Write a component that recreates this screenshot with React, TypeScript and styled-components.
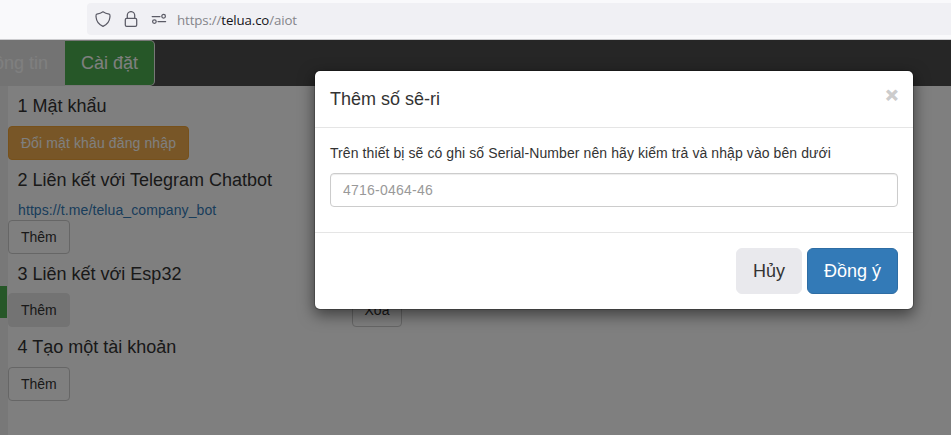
import React from "react";
import styled, { createGlobalStyle, css } from "styled-components";

const Global = createGlobalStyle`
  *, *::before, *::after { box-sizing: border-box; }
  html, body { margin: 0; padding: 0; overflow: hidden; }
  body {
    font-family: "Liberation Sans", Arial, sans-serif;
    font-size: 14px;
    line-height: 20px;
    color: #333;
    background: #fff;
  }
  button, input { font-family: inherit; margin: 0; }
`;

const Window = styled.div`
  display: flex;
  flex-direction: column;
  width: 100%;
  height: 435px;
`;

const BrowserBar = styled.header`
  flex: none;
  height: 40px;
  padding: 3px 0 0 87px;
  background: #f9f9fb;
  border-bottom: 1px solid #cccccf;
`;

const AddressField = styled.div`
  display: flex;
  align-items: center;
  height: 32px;
  padding-left: 8px;
  background: #f0f0f4;
  border-radius: 4px 0 0 4px;
  svg { flex: none; margin-right: 12px; }
`;

const Url = styled.span`
  font-family: "Open Sans", "Noto Sans", sans-serif;
  font-size: 13.3px;
  line-height: 20px;
  letter-spacing: -0.13px;
  color: #85858b;
  margin: 2px 0 0 -2px;
  strong { font-weight: 400; color: #15141a; }
`;

const Viewport = styled.div`
  position: relative;
  flex: 1;
  overflow: hidden;
  background: #f1f1f1;
`;

const Nav = styled.nav`
  display: flex;
  height: 46px;
  background: #4d4d4d;
`;

const Tab = styled.div<{ $active?: boolean }>`
  display: flex;
  justify-content: flex-end;
  align-items: center;
  width: ${(p) => (p.$active ? 90 : 65)}px;
  padding-right: 17px;
  font-size: 18px;
  white-space: nowrap;
  color: #fff;
  background: #e7e7e7;
  ${(p) =>
    p.$active &&
    css`
      background: #4caf50;
      border: 1px solid #eee;
      border-left: 0;
      border-radius: 0 5px 5px 0;
      padding-right: 16px;
    `}
`;

const Body = styled.div`
  display: flex;
  height: 349px;
`;

const Rail = styled.div`
  width: 8px;
  padding-top: 200px;
`;

const RailTab = styled.div`
  width: 7px;
  height: 32px;
  background: #4caf50;
`;

const Content = styled.main`
  flex: 1;
  background: #fff;
`;

const Heading = styled.h4`
  margin: 0;
  padding: 11px 10px 9px 9.5px;
  font-size: 18px;
  font-weight: 400;
  line-height: 19.8px;
`;

const Link = styled.a`
  display: block;
  padding-left: 10px;
  letter-spacing: 0.1px;
  color: #337ab7;
  text-decoration: none;
`;

const ButtonRow = styled.div`
  display: grid;
  grid-template-columns: 344px auto;
  justify-items: start;
  justify-content: start;
`;

type Tone = "default" | "active" | "warning" | "cancel" | "primary";

const tones: Record<Tone, [string, string, string]> = {
  default: ["#fff", "#ccc", "#333"],
  active: ["#e6e6e6", "#e6e6e6", "#333"],
  warning: ["#f0ad4e", "#eea236", "#fff"],
  cancel: ["#e9e9ed", "#e9e9ed", "#333"],
  primary: ["#337ab7", "#2e6da4", "#fff"],
};

const Button = styled.button<{ $tone?: Tone; $large?: boolean; $width?: number }>`
  display: inline-block;
  width: ${(p) => (p.$width ? `${p.$width}px` : "auto")};
  height: ${(p) => (p.$large ? 46 : 34)}px;
  padding: ${(p) => (p.$large ? "0 16px" : p.$width ? "0" : "0 12px")};
  font-size: ${(p) => (p.$large ? 18 : 14)}px;
  line-height: 20px;
  letter-spacing: ${(p) => (p.$tone === "warning" ? "0.12px" : "normal")};
  white-space: nowrap;
  border-radius: ${(p) => (p.$large ? 6 : 4)}px;
  border: 1px solid ${(p) => tones[p.$tone ?? "default"][1]};
  background: ${(p) => tones[p.$tone ?? "default"][0]};
  color: ${(p) => tones[p.$tone ?? "default"][2]};
`;

const Backdrop = styled.div`
  position: absolute;
  inset: 0;
  padding: 30px 0 0 314px;
  background: rgba(0, 0, 0, 0.5);
`;

const Dialog = styled.section`
  width: 600px;
  height: 240px;
  background: #fff;
  background-clip: padding-box;
  border: 1px solid rgba(0, 0, 0, 0.2);
  border-radius: 6px;
  box-shadow: 0 5px 15px rgba(0, 0, 0, 0.5);
`;

const DialogHeader = styled.div`
  display: flex;
  justify-content: space-between;
  height: 57px;
  padding: 15px;
  border-bottom: 1px solid #e5e5e5;
`;

const DialogTitle = styled.h4`
  margin: 0;
  font-size: 18px;
  font-weight: 400;
  line-height: 26px;
`;

const Close = styled.span`
  height: 21px;
  margin-top: -2px;
  font-size: 21px;
  font-weight: 700;
  line-height: 21px;
  color: #ccc;
  -webkit-text-stroke: 0.9px #ccc;
`;

const DialogBody = styled.div`
  display: flex;
  flex-direction: column;
  gap: 10px;
  height: 104px;
  padding: 15px;
`;

const Prompt = styled.label`
  letter-spacing: 0.086px;
`;

const SerialInput = styled.input`
  width: 100%;
  height: 34px;
  padding: 6px 12px;
  font-size: 14px;
  letter-spacing: 0.24px;
  border: 1px solid #ccc;
  border-radius: 4px;
  box-shadow: inset 0 1px 1px rgba(0, 0, 0, 0.075);
  &::placeholder { color: #999; opacity: 1; }
`;

const DialogFooter = styled.div`
  display: flex;
  justify-content: flex-end;
  gap: 5px;
  padding: 15px;
  border-top: 1px solid #e5e5e5;
`;

const iconProps = {
  height: 16,
  viewBox: "0 0 16 16",
  fill: "none",
  stroke: "#5b5b66",
  strokeWidth: 1.25,
  strokeLinecap: "round" as const,
  strokeLinejoin: "round" as const,
};

const ShieldIcon = () => (
  <svg {...iconProps} width={16}>
    <path d="M8 .8C9.7 2 12 2.8 14.2 3.2C15.3 3.4 15 5 14.9 6.2C14.6 10.4 12 13.5 8 15.4C4 13.5 1.4 10.4 1.1 6.2C1 5 .7 3.4 1.8 3.2C4 2.8 6.3 2 8 .8Z" />
  </svg>
);

const LockIcon = () => (
  <svg {...iconProps} width={16}>
    <rect x="2.3" y="7.4" width="11.4" height="7.9" rx="1.4" />
    <path d="M4.3 7.2V4.3a3.7 3.7 0 0 1 7.4 0v2.9" />
  </svg>
);

const PermissionsIcon = () => (
  <svg {...iconProps} width={16}>
    <path d="M1.2 5.5H9M7 10.5h7.6" />
    <circle cx="12.6" cy="5.2" r="1.8" />
    <circle cx="3.4" cy="10.6" r="1.8" />
  </svg>
);

export default function App() {
  return (
    <>
      <Global />
      <Window>
        <BrowserBar>
          <AddressField>
            <ShieldIcon />
            <LockIcon />
            <PermissionsIcon />
            <Url>https://<strong>telua.co</strong>/aiot</Url>
          </AddressField>
        </BrowserBar>
        <Viewport>
          <Nav>
            <Tab>Thông tin</Tab>
            <Tab $active>Cài đặt</Tab>
          </Nav>
          <Body>
            <Rail><RailTab /></Rail>
            <Content>
              <Heading>1 Mật khẩu</Heading>
              <ButtonRow><Button $tone="warning" $width={181}>Đổi mật khâu đăng nhập</Button></ButtonRow>
              <Heading>2 Liên kết với Telegram Chatbot</Heading>
              <Link>https://t.me/telua_company_bot</Link>
              <ButtonRow><Button>Thêm</Button></ButtonRow>
              <Heading>3 Liên kết với Esp32</Heading>
              <ButtonRow>
                <Button $tone="active">Thêm</Button>
                <Button $width={50}>Xóa</Button>
              </ButtonRow>
              <Heading>4 Tạo một tài khoản</Heading>
              <ButtonRow><Button>Thêm</Button></ButtonRow>
            </Content>
          </Body>
          <Backdrop>
            <Dialog role="dialog">
              <DialogHeader>
                <DialogTitle>Thêm số sê-ri</DialogTitle>
                <Close>×</Close>
              </DialogHeader>
              <DialogBody>
                <Prompt>Trên thiết bị sẽ có ghi số Serial-Number nên hãy kiểm trả và nhập vào bên dưới</Prompt>
                <SerialInput placeholder="4716-0464-46" />
              </DialogBody>
              <DialogFooter>
                <Button $tone="cancel" $large>Hủy</Button>
                <Button $tone="primary" $large>Đồng ý</Button>
              </DialogFooter>
            </Dialog>
          </Backdrop>
        </Viewport>
      </Window>
    </>
  );
}
